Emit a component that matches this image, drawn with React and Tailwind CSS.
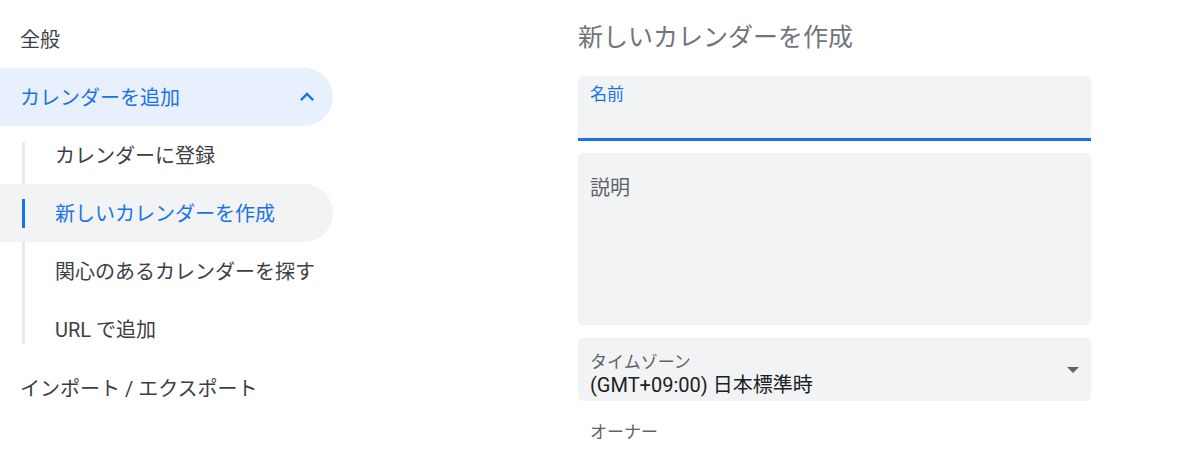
import React from "react";

const FONT = { fontFamily: 'Roboto, "Noto Sans CJK JP", sans-serif' };

function ChevronUp() {
  return (
    <svg width="28" height="28" viewBox="0 0 24 24" className="shrink-0">
      <path d="M12 8l-6 6 1.41 1.41L12 10.83l4.59 4.58L18 14z" fill="#1a73e8" />
    </svg>
  );
}

function DropArrow() {
  return (
    <svg width="12" height="6" viewBox="0 0 12 6" className="shrink-0 mb-[8px]">
      <path d="M0 0l6 6 6-6z" fill="#5f6368" />
    </svg>
  );
}

export default function App() {
  return (
    <div className="flex w-[1200px] h-[450px] overflow-hidden bg-white" style={FONT}>
      {/* Left nav */}
      <nav className="w-[333px] shrink-0 pt-[10px] text-[20px] text-[#3c4043] flex flex-col">
        <div className="h-[58px] flex items-center pl-[20px] pt-[1px]">全般</div>
        <div className="h-[58px] flex items-center justify-between pl-[20px] pr-[12px] bg-[#e8f0fe] rounded-r-full text-[#1a73e8]">
          <span className="pt-[1px]">カレンダーを追加</span>
          <ChevronUp />
        </div>
        <div className="ml-[22px] border-l-[3px] border-[#e8eaed] mt-[16px] mb-[14px] flex flex-col">
          <div className="h-[58px] shrink-0 -mt-[16px] flex items-center pl-[30px] pt-[2px]">カレンダーに登録</div>
          <div className="h-[58px] shrink-0 -ml-[25px] w-[333px] flex items-center bg-[#f1f3f4] rounded-r-full text-[#1a73e8]">
            <span className="ml-[22px] w-[3px] h-[29px] bg-[#1a73e8]" />
            <span className="ml-[30px] pt-[2px]">新しいカレンダーを作成</span>
          </div>
          <div className="h-[58px] shrink-0 flex items-center pl-[30px] pt-[2px]">関心のあるカレンダーを探す</div>
          <div className="h-[58px] shrink-0 -mb-[14px] flex items-center pl-[30px] pt-[2px]">URL で追加</div>
        </div>
        <div className="h-[58px] flex items-center pl-[20px] pt-[3px]">インポート / エクスポート</div>
      </nav>

      {/* Right content */}
      <main className="ml-[245px] w-[513px] shrink-0 pt-[22px]">
        <h1 className="text-[25px] leading-[32px] text-[#70757a] font-normal">新しいカレンダーを作成</h1>

        <div className="mt-[22px] h-[65px] bg-[#f1f3f4] rounded-t-[5px] border-b-[3px] border-[#1a73e8] px-3 pt-[8px]">
          <div className="text-[17px] leading-[20px] text-[#1a73e8]">名前</div>
        </div>

        <div className="mt-[12px] h-[172px] bg-[#f1f3f4] rounded-[5px] px-3 pt-[23px]">
          <div className="text-[20px] leading-[24px] text-[#5f6368]">説明</div>
        </div>

        <div className="mt-[13px] h-[63px] bg-[#f1f3f4] rounded-[5px] pl-3 pr-3 pt-[8px] flex items-center justify-between">
          <div className="flex flex-col">
            <span className="text-[17px] leading-[22px] text-[#5f6368]">タイムゾーン</span>
            <span className="text-[20px] leading-[24px] text-[#202124]">(GMT+09:00) 日本標準時</span>
          </div>
          <DropArrow />
        </div>

        <div className="mt-[21px] pl-3 text-[17px] leading-[20px] text-[#5f6368]">オーナー</div>
      </main>
    </div>
  );
}
